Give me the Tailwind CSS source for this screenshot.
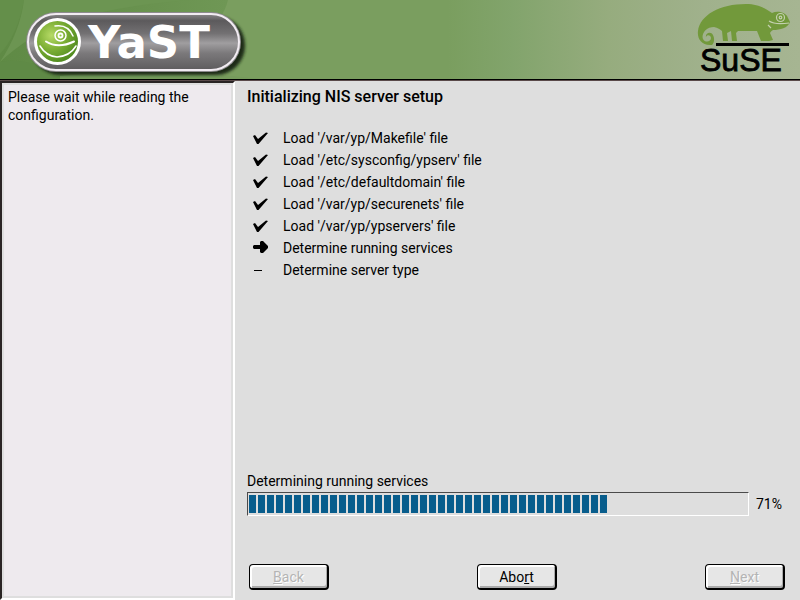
<!DOCTYPE html>
<html lang="en">
<head>
<meta charset="utf-8">
<meta name="viewport" content="width=device-width, initial-scale=1">
<title>YaST</title>
<script src="https://cdn.jsdelivr.net/npm/@tailwindcss/browser@4"></script>
</head>
<body class="flex h-screen flex-col overflow-hidden bg-[#dedede] font-['Roboto','Noto_Sans',sans-serif] text-[14px] leading-[18px] text-black">
<header class="relative flex h-[81px] shrink-0 items-start justify-between border-b border-[#5a4a4a] bg-[linear-gradient(90deg,#7a9e5f_0%,#7a9e5f_56%,#82a46c_64%,#96ac7e_76%,#a0b18c_88%,#a6b592_100%)] shadow-[inset_0_-1px_0_#000]">
<svg class="h-[79px] w-[260px]" viewBox="0 0 260 79" role="img" aria-label="YaST">
<defs>
<linearGradient id="pill" x1="0" y1="0" x2="0" y2="1"><stop offset="0" stop-color="#8a888a"/><stop offset=".12" stop-color="#5c5a5c"/><stop offset=".35" stop-color="#737173"/><stop offset=".52" stop-color="#a09ea0"/><stop offset=".7" stop-color="#7b797b"/><stop offset="1" stop-color="#5e5c5e"/></linearGradient>
<radialGradient id="ball" cx=".35" cy=".35" r=".7"><stop offset="0" stop-color="#b6da66"/><stop offset=".5" stop-color="#7daf35"/><stop offset="1" stop-color="#4f8a1e"/></radialGradient>
<linearGradient id="leaf" x1="0" y1="0" x2="1" y2="0"><stop offset="0" stop-color="#5f8a45"/><stop offset="1" stop-color="#6f9755"/></linearGradient>
<filter id="soft" x="-10%" y="-20%" width="120%" height="150%"><feGaussianBlur stdDeviation="1.6"/></filter>
</defs>
<path d="M0 0H228Q224 18 202 40V79H0Z" fill="url(#leaf)"/>
<path d="M0 0H24Q18 34 0 54Z" fill="#648f4a"/>
<path d="M24 0H190Q110 6 60 24Q28 36 0 62Q20 32 24 0Z" fill="#6c9552"/>
<path d="M0 62Q30 56 70 79H0Z" fill="#5f8a46"/>
<path d="M60 76Q150 66 260 79H60Z" fill="#769b5c"/>
<rect x="31" y="16" width="214" height="59" rx="29" fill="#1b2a12" filter="url(#soft)"/>
<rect x="26" y="12" width="215" height="60" rx="30" fill="#8d8b8d"/>
<rect x="28" y="14" width="211" height="56" rx="28" fill="url(#pill)" stroke="#f2ecf2" stroke-width="2"/>
<circle cx="57.500" cy="41.500" r="23.500" fill="#fff"/>
<circle cx="57.500" cy="41.500" r="20.500" fill="url(#ball)"/>
<g fill="none" stroke="#fff" stroke-linecap="round"><circle cx="60.500" cy="35.500" r="5.500" stroke-width="1.500"/><circle cx="60.500" cy="35.500" r="2" stroke-width="1.800"/><path d="M55 26Q68 24 73 36" stroke-width="1.500"/><path d="M46 41.500Q58 49 74 41.500" stroke-width="2"/><path d="M40 46Q46 56 57 57Q70 56 76 46" stroke-width="1.500"/></g>
<text x="88" y="58" font-family="DejaVu Sans, sans-serif" font-size="45" font-weight="700" fill="#fff">YaST</text>
</svg>
<svg class="h-[79px] w-[108px]" viewBox="0 0 108 79" role="img" aria-label="SuSE">
<path d="M20 45C9 46 5 38 6 31C8 15 28 4 54 4C67 4 74 9 80 13C86 10 95 13 96 18L98 22C96 28 88 30 81 30Q79 31 78 33L81 40L77 41L73 34L71 31H75L77 41H69L65 31H46L44 33L45 41H40L39 31L35 33L36 41H31L30 31C28 29 26 28 22 27C14 27 9 34 11 39C13 43 19 42 19 38C19 35 15 34 14 37C13 33 19 31 21 35C23 39 22 43 20 45Z" fill="#72993b"/>
<g fill="none" stroke="#c3d0ae" stroke-width="1.200"><circle cx="88.500" cy="17.500" r="4"/><circle cx="88.500" cy="17.500" r="1.300"/><path d="M76 25L79 28M77 21Q83 25 97 23"/></g>
<path d="M24 43H97V46H24Z"/>
<text x="8" y="71" font-family="Liberation Sans, Arial, sans-serif" font-size="32" stroke="#000" stroke-width=".8">SuSE</text>
</svg>
</header>
<div class="flex min-h-0 flex-1">
<aside class="w-[235px] shrink-0 border-2 border-t-[#2a2424] border-r-white border-b-white border-l-[#2a2424]">
<p class="h-full border-2 border-[#dedede] bg-[#eeeaee] px-1 py-[3px]">Please wait while reading the configuration.</p>
</aside>
<main class="flex flex-1 flex-col pt-[7px] pr-[15px] pb-[10px] pl-3">
<h1 class="text-[16px] leading-[18px] font-medium">Initializing NIS server setup</h1>
<ul class="mt-[21px] pl-1 leading-[22px]">
<li class="flex items-center"><svg class="mr-3 h-4 w-5" viewBox="0 0 20 16"><path d="M2 6L4 5L7 9L15 2.500L17 3L7.500 14H6Z"/></svg>Load '/var/yp/Makefile' file</li>
<li class="flex items-center"><svg class="mr-3 h-4 w-5" viewBox="0 0 20 16"><path d="M2 6L4 5L7 9L15 2.500L17 3L7.500 14H6Z"/></svg>Load '/etc/sysconfig/ypserv' file</li>
<li class="flex items-center"><svg class="mr-3 h-4 w-5" viewBox="0 0 20 16"><path d="M2 6L4 5L7 9L15 2.500L17 3L7.500 14H6Z"/></svg>Load '/etc/defaultdomain' file</li>
<li class="flex items-center"><svg class="mr-3 h-4 w-5" viewBox="0 0 20 16"><path d="M2 6L4 5L7 9L15 2.500L17 3L7.500 14H6Z"/></svg>Load '/var/yp/securenets' file</li>
<li class="flex items-center"><svg class="mr-3 h-4 w-5" viewBox="0 0 20 16"><path d="M2 6L4 5L7 9L15 2.500L17 3L7.500 14H6Z"/></svg>Load '/var/yp/ypservers' file</li>
<li class="flex items-center"><svg class="mr-3 h-4 w-5" viewBox="0 0 20 16"><path d="M3 5H9V2L10 1H12L17 6V8L12 13H10L9 12V9H3L2 8V6Z"/></svg>Determine running services</li>
<li class="flex items-center"><svg class="mr-3 h-4 w-5" viewBox="0 0 20 16"><path d="M3 8H11V9H3Z"/></svg>Determine server type</li>
</ul>
<div class="mt-auto">
<div id="stage">Determining running services</div>
<div class="mt-[2px] flex items-center gap-[7px]">
<div role="progressbar" aria-labelledby="stage" aria-valuenow="71" aria-valuemin="0" aria-valuemax="100" class="h-6 flex-1 border border-t-[#4a4a4a] border-r-white border-b-white border-l-[#4a4a4a] py-[2px] pl-px"><div class="h-full bg-[repeating-linear-gradient(90deg,#085d8c_0_7px,#dedede_7px_9px)]" style="width:72%"></div></div>
<span class="w-[29px]">71%</span>
</div>
</div>
<div class="mt-12 flex justify-between pl-[2px]">
<button disabled class="h-[26px] w-20 rounded-[4px] border border-b-2 border-r-2 border-black bg-[#e6e6e6] text-[#b4b4b4] shadow-[inset_2px_2px_0_#fff,inset_-1px_-2px_0_#aaa] [text-shadow:1px_1px_0_#fff]"><u>B</u>ack</button>
<button class="h-[26px] w-20 rounded-[4px] border border-b-2 border-r-2 border-black bg-[#e6e6e6] shadow-[inset_2px_2px_0_#fff,inset_-1px_-2px_0_#aaa]">Abo<u>r</u>t</button>
<button disabled class="h-[26px] w-20 rounded-[4px] border border-b-2 border-r-2 border-black bg-[#e6e6e6] text-[#b4b4b4] shadow-[inset_2px_2px_0_#fff,inset_-1px_-2px_0_#aaa] [text-shadow:1px_1px_0_#fff]"><u>N</u>ext</button>
</div>
</main>
</div>
</body>
</html>
